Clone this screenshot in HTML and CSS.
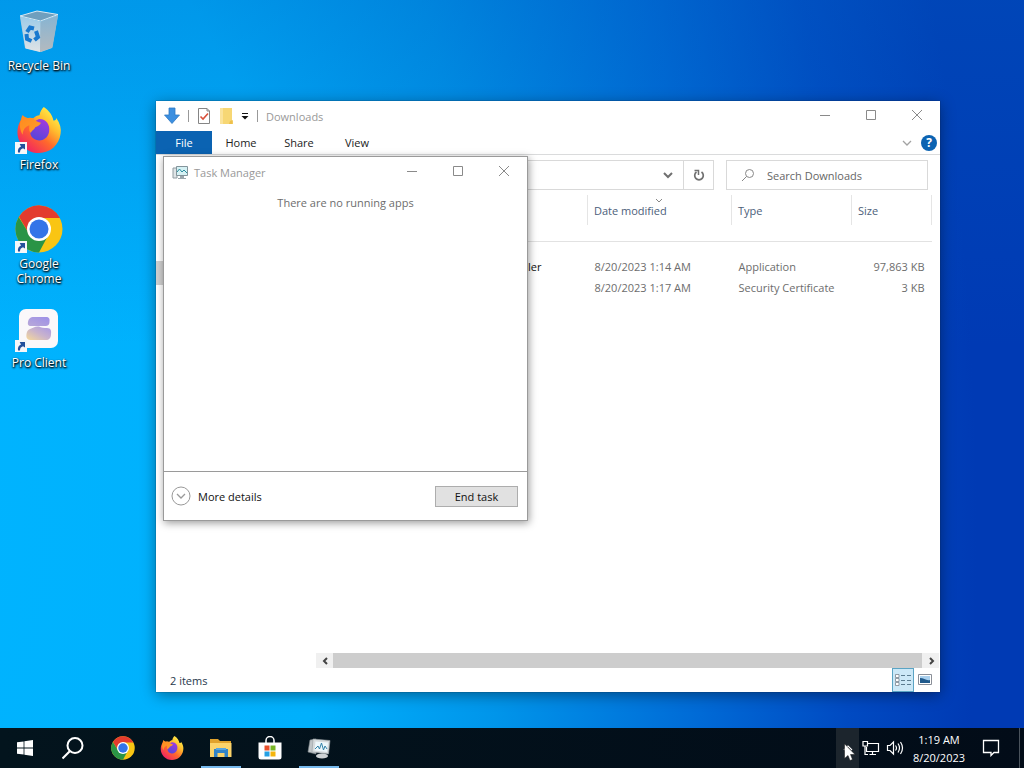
FILE: index.html
```
<!DOCTYPE html>
<html lang="en">
<head>
<meta charset="utf-8">
<meta name="viewport" content="width=device-width, initial-scale=1">
<title>Desktop</title>
<link rel="stylesheet" href="styles.css">
</head>
<body>
<svg class="defs" aria-hidden="true">
  <defs>
    <linearGradient id="ffBody" x1=".85" y1=".1" x2=".2" y2=".9">
      <stop offset="0" stop-color="#fff04a"/><stop offset=".3" stop-color="#ffbd2e"/><stop offset=".6" stop-color="#ff6a2b"/><stop offset="1" stop-color="#f2275f"/>
    </linearGradient>
    <linearGradient id="ffGlobe" x1=".7" y1="0" x2=".3" y2="1">
      <stop offset="0" stop-color="#a13adf"/><stop offset="1" stop-color="#5546d8"/>
    </linearGradient>
    <linearGradient id="ffHead" x1="0" y1="0" x2="1" y2="1">
      <stop offset="0" stop-color="#ff8a1f"/><stop offset="1" stop-color="#ff9d2a"/>
    </linearGradient>
    <linearGradient id="binFront" x1="0" y1="0" x2="0" y2="1">
      <stop offset="0" stop-color="#9dcbe8"/><stop offset="1" stop-color="#dfe3e6"/>
    </linearGradient>
    <linearGradient id="binSide" x1="0" y1="0" x2="0" y2="1">
      <stop offset="0" stop-color="#86b4d2"/><stop offset="1" stop-color="#b4babf"/>
    </linearGradient>
    <linearGradient id="proTop" x1="0" y1="1" x2="1" y2="0">
      <stop offset="0" stop-color="#b9a9d8"/><stop offset="1" stop-color="#9c8fe8"/>
    </linearGradient>
    <linearGradient id="proLow" x1="0" y1="1" x2="1" y2="0">
      <stop offset="0" stop-color="#f6d99a"/><stop offset=".5" stop-color="#c9b3cc"/><stop offset="1" stop-color="#a797e6"/>
    </linearGradient>
    <symbol id="chrome" viewBox="0 0 48 48">
      <circle cx="24" cy="24" r="23.500" fill="#f9c513"/>
      <path d="M24 13H45A23.500 23.500 0 0 0 4 11.800L14.500 29.500Z" fill="#e33b2e"/>
      <path d="M14.500 29.500L3.700 12A23.500 23.500 0 0 0 24 47.500L33.600 29.500L24 35Z" fill="#2a9446"/>
      <circle cx="24" cy="24" r="12" fill="#fff"/>
      <circle cx="24" cy="24" r="9.500" fill="#3374e8"/>
    </symbol>
    <symbol id="firefox" viewBox="0 0 48 48">
      <path d="M29 0C35 4 38 9 39 14C41 14.500 42 13 42 11.500C46 17 47.500 23 46.500 28C45 40 35.500 48 24 48C11 48 1.500 38 1.500 26C1.500 21 3 16.500 5.500 13C5.500 11 6 9.500 7 8.500C8 10 9 11 10.500 12C13 11 16 11 18 11.800C20 9.500 22.500 8.500 24.500 8.500C25 5 27 2 29 0Z" fill="url(#ffBody)"/>
      <path d="M24 12.500C31 12 36 18 34.500 26C33 33 27 36 21.500 34.500C16 33 14 28 15 23C16 18 20 14 24 12.500Z" fill="url(#ffGlobe)"/>
      <path d="M7 8.500C10 12 14 11.300 18 11.800C19.500 14.500 22 15.500 26 16.500C25.500 19 22.500 20.500 20 21C19.500 23.500 16 24.500 15.500 27C13 25 14 21 14 19C10 20 7 24 7 29C4 24 3 17 5.500 13Z" fill="url(#ffHead)"/>
    </symbol>
    <symbol id="shortcut" viewBox="0 0 12 12">
      <path d="M0 0H12V12H0Z" fill="#f6f7f9"/>
      <path d="M3 10.500C2.500 7.500 3.500 5.500 6 4.500L4.700 2H10V7.500L8 6.300C5.800 7 5 8.500 5 10.500Z" fill="#24509c"/>
    </symbol>
    <symbol id="min" viewBox="0 0 12 12"><path d="M1 5.500H11" stroke="currentColor"/></symbol>
    <symbol id="max" viewBox="0 0 12 12"><path d="M1.500 .5H10.500V9.500H1.500Z" fill="none" stroke="currentColor"/></symbol>
    <symbol id="close" viewBox="0 0 12 12"><path d="M1 0L11 10M11 0L1 10" stroke="currentColor"/></symbol>
  </defs>
</svg>

<main class="desktop">
  <nav class="shortcuts" aria-label="Desktop shortcuts">
    <a class="shortcut" href="#recycle-bin">
      <svg class="shortcut-icon" viewBox="0 0 48 48" aria-hidden="true">
        <path d="M5 10L25 15L43 8L37 41L26 45L10 41Z" fill="#a9c9dc"/>
        <path d="M5.500 9.500L25.500 14.500L25 45L10.500 41.500Z" fill="url(#binFront)"/>
        <path d="M25.500 14.500L43 8.500L37.500 40.500L25 45Z" fill="url(#binSide)"/>
        <path d="M5 9L22 4L43 7.500L25.500 14Z" fill="#6f9fbe" stroke="#dbeaf3"/>
        <g fill="none" stroke="#1879cf" stroke-width="4"><path d="M12 25L15 20.500L19 21.500"/><path d="M21 24L23 30L19.500 33"/><path d="M16.500 34L12 32L11.500 27"/></g>
      </svg>
      <span class="shortcut-label">Recycle Bin</span>
    </a>
    <a class="shortcut" href="#firefox">
      <svg class="shortcut-icon" viewBox="0 0 48 48" aria-hidden="true">
        <use href="#firefox" x="1" y="1" width="46" height="46"/><use href="#shortcut" x="0" y="36" width="12" height="12"/>
      </svg>
      <span class="shortcut-label">Firefox</span>
    </a>
    <a class="shortcut" href="#chrome">
      <svg class="shortcut-icon" viewBox="0 0 48 48" aria-hidden="true">
        <use href="#chrome" width="48" height="48"/><use href="#shortcut" x="0" y="36" width="12" height="12"/>
      </svg>
      <span class="shortcut-label">Google Chrome</span>
    </a>
    <a class="shortcut" href="#pro-client">
      <svg class="shortcut-icon" viewBox="0 0 48 48" aria-hidden="true">
        <rect x="4" y="5" width="39" height="39" rx="7" fill="#faf8fa"/>
        <path d="M19 13H31C34 13 35 15 34.500 17.500C34.500 21 33 22 30 22H16C13 22 12.500 20 13 18C13.500 15 15 13 19 13Z" fill="url(#proTop)"/>
        <path d="M15 25C18 24 20 22 24 22.500C26 24 29 24 32 24C36 24 36.500 27 36 30C36 34 34 36 31 36H17C12 36 11 34 11.500 30C12 27 13 26 15 25Z" fill="url(#proLow)"/>
        <use href="#shortcut" x="0" y="36" width="12" height="12"/>
      </svg>
      <span class="shortcut-label">Pro Client</span>
    </a>
  </nav>

  <section class="window explorer" aria-label="Downloads">
    <header class="titlebar">
      <div class="quick">
        <svg width="16" height="18" viewBox="0 0 16 18" aria-hidden="true"><path d="M5 1H11V8H15.500L8 16.500L.5 8H5Z" fill="#3b8fe0" stroke="#2d78c4" stroke-width=".8"/></svg>
        <span class="bar"></span>
        <button class="tool" aria-label="Properties"><svg width="14" height="16" viewBox="0 0 14 16"><path d="M1.500.5H10L12.500 3V15.500H1.500Z" fill="#fff" stroke="#858585"/><path d="M10 .5V3H12.500" fill="none" stroke="#858585"/><path d="M3.500 8.500L6 11L11 5.500" fill="none" stroke="#d9503a" stroke-width="1.600"/></svg></button>
        <button class="tool" aria-label="New folder"><svg width="14" height="16" viewBox="0 0 14 16"><path d="M1 0H13V12L14 13V16H1Z" fill="#f7d774"/><path d="M1 0H4V16H1Z" fill="#fbe39a"/><path d="M11 13L13.500 12V16H10Z" fill="#eec04c"/></svg></button>
        <button class="tool" aria-label="Customize toolbar"><svg width="8" height="8" viewBox="0 0 8 8"><path d="M1 1.500H7" stroke="#111"/><path d="M.5 4H7.500L4 7.500Z" fill="#111"/></svg></button>
        <span class="bar"></span>
        <h1 class="title">Downloads</h1>
      </div>
      <div class="controls">
        <button class="control" aria-label="Minimize"><svg width="12" height="12"><use href="#min"/></svg></button>
        <button class="control" aria-label="Maximize"><svg width="12" height="12"><use href="#max"/></svg></button>
        <button class="control" aria-label="Close"><svg width="12" height="12"><use href="#close"/></svg></button>
      </div>
    </header>

    <div class="ribbon">
      <button class="tab tab-file">File</button>
      <button class="tab">Home</button>
      <button class="tab">Share</button>
      <button class="tab">View</button>
      <div class="ribbon-end">
        <button class="tool" aria-label="Expand the ribbon"><svg width="10" height="8" viewBox="0 0 10 8"><path d="M1 2L5 6L9 2" fill="none" stroke="#a2a2a2" stroke-width="1.300"/></svg></button>
        <button class="help" aria-label="Help">?</button>
      </div>
    </div>

    <div class="navbar">
      <div class="address">
        <input class="address-input" type="text" aria-label="Address">
        <button class="tool address-drop" aria-label="Previous locations"><svg width="10" height="8" viewBox="0 0 10 8"><path d="M1 2L5 6L9 2" fill="none" stroke="#707070" stroke-width="2"/></svg></button>
        <button class="refresh" aria-label="Refresh"><svg width="12" height="14" viewBox="0 0 12 14"><path d="M8.500 4A4.300 4.300 0 1 1 3.500 4" fill="none" stroke="#707070" stroke-width="1.700"/><path d="M1.500 2.500H5.500V7" fill="none" stroke="#707070" stroke-width="1.500"/></svg></button>
      </div>
      <label class="search">
        <svg width="14" height="14" viewBox="0 0 14 14" aria-hidden="true"><circle cx="8.500" cy="5.500" r="4" fill="none" stroke="#888"/><path d="M5.500 8.500L1 13" stroke="#888"/></svg>
        <input class="search-input" type="search" placeholder="Search Downloads" aria-label="Search Downloads">
      </label>
    </div>

    <div class="content">
      <div class="tree"><div class="tree-selected"></div></div>
      <div class="files">
        <table class="file-table">
          <colgroup><col><col class="col-date"><col class="col-type"><col class="col-size"></colgroup>
          <thead>
            <tr><th scope="col" aria-label="Name"></th><th scope="col"><span class="sorted">Date modified<svg class="sort-mark" width="8" height="5" viewBox="0 0 8 5" aria-hidden="true"><path d="M1 1L4 4L7 1" fill="none" stroke="#888"/></svg></span></th><th scope="col">Type</th><th scope="col">Size</th></tr>
          </thead>
          <tbody>
            <tr class="group"><td colspan="4"></td></tr>
            <tr class="gap"><td colspan="4"></td></tr>
            <tr><td class="name">ler</td><td>8/20/2023 1:14 AM</td><td>Application</td><td class="size">97,863 KB</td></tr>
            <tr><td class="name"></td><td>8/20/2023 1:17 AM</td><td>Security Certificate</td><td class="size">3 KB</td></tr>
          </tbody>
        </table>
        <div class="scroll">
          <button class="scroll-arrow" aria-label="Scroll left"><svg width="8" height="8" viewBox="0 0 8 8"><path d="M6 1L3 4L6 7" fill="none" stroke="#444" stroke-width="2"/></svg></button>
          <div class="scroll-thumb"></div>
          <button class="scroll-arrow" aria-label="Scroll right"><svg width="8" height="8" viewBox="0 0 8 8"><path d="M3 1L6 4L3 7" fill="none" stroke="#444" stroke-width="2"/></svg></button>
        </div>
      </div>
    </div>

    <footer class="status">
      <span>2 items</span>
      <div class="views">
        <button class="view view-on" aria-label="Details"><svg width="16" height="14" viewBox="0 0 16 14"><path d="M.5 1.500H4V4.500H.5ZM.5 5.500H4V8.500H.5ZM.5 9.500H4V12.500H.5Z" fill="#fff" stroke="#7c8590" stroke-width=".8"/><path d="M6 2.500H10M12 2.500H16M6 7.500H10M12 7.500H16M6 11.500H10M12 11.500H16" stroke="#5b7c90"/></svg></button>
        <button class="view" aria-label="Large icons"><svg width="14" height="12" viewBox="0 0 14 12"><path d="M.5.5H13.500V10.500H.5Z" fill="#fff" stroke="#8a8f98"/><path d="M2 2H12V9H2Z" fill="#a9d0ee"/><path d="M2 4C6 4 8 7 12 6V9H2Z" fill="#205a8c"/></svg></button>
      </div>
    </footer>
  </section>

  <section class="window taskman" aria-label="Task Manager">
    <header class="titlebar">
      <div class="taskman-name">
        <svg width="16" height="16" viewBox="0 0 16 16" aria-hidden="true"><path d="M1 4H5V14H1Z" fill="#dfe4e6" stroke="#919ca1"/><path d="M4.500 2.500H15.500V11.500H4.500Z" fill="#d5f1f4" stroke="#83949b"/><path d="M5 8L7.500 5L10 8L12 6L15 9" fill="none" stroke="#2b8d9f"/><path d="M8 12H12V14H14V15H6V14H8Z" fill="#9aa6ac"/></svg>
        <h2 class="title">Task Manager</h2>
      </div>
      <div class="controls">
        <button class="control" aria-label="Minimize"><svg width="12" height="12"><use href="#min"/></svg></button>
        <button class="control" aria-label="Maximize"><svg width="12" height="12"><use href="#max"/></svg></button>
        <button class="control" aria-label="Close"><svg width="12" height="12"><use href="#close"/></svg></button>
      </div>
    </header>
    <p class="empty">There are no running apps</p>
    <footer class="taskman-foot">
      <button class="more"><svg width="20" height="20" viewBox="0 0 20 20" aria-hidden="true"><circle cx="10" cy="10" r="9" fill="#fff" stroke="#999"/><path d="M6 8L10 12L14 8" fill="none" stroke="#999" stroke-width="1.300"/></svg>More details</button>
      <button class="end">End task</button>
    </footer>
  </section>
</main>

<footer class="taskbar">
  <div class="apps">
    <button class="app" aria-label="Start"><svg width="16" height="16" viewBox="0 0 16 16"><path d="M0 2.300L6.600 1.400V7.600H0ZM7.400 1.300L16 0V7.600H7.400ZM0 8.400H6.600V14.600L0 13.700ZM7.400 8.400H16V16L7.400 14.700Z" fill="#fff"/></svg></button>
    <button class="app" aria-label="Search"><svg width="24" height="24" viewBox="0 0 24 24"><circle cx="13" cy="9.500" r="7.500" fill="none" stroke="#fff" stroke-width="2"/><path d="M8 15L.5 22.500" stroke="#fff" stroke-width="2.200"/></svg></button>
    <button class="app" aria-label="Google Chrome"><svg width="24" height="24"><use href="#chrome"/></svg></button>
    <button class="app" aria-label="Firefox"><svg width="24" height="24"><use href="#firefox"/></svg></button>
    <button class="app app-open" aria-label="File Explorer"><svg width="24" height="24" viewBox="0 0 24 24"><path d="M1 3H9L11 5H22V9H1Z" fill="#e0a22c"/><path d="M1 7H22.500V21H1Z" fill="#fbd36a"/><path d="M5 13H19V21H15.500V17H8.500V21H5Z" fill="#3284c8"/><path d="M7 12H17V14H7Z" fill="#57a5df"/></svg></button>
    <button class="app" aria-label="Microsoft Store"><svg width="24" height="24" viewBox="0 0 24 24"><path d="M8 7V4.500A4 4 0 0 1 16 4.500V7" fill="none" stroke="#fff" stroke-width="1.500"/><path d="M.5 6.500H23.500V21Q23.500 23.500 21 23.500H3Q.5 23.500 .5 21Z" fill="#fff"/><path d="M6.500 9.500H11.500V14.500H6.500Z" fill="#e8502c"/><path d="M12.500 9.500H17.500V14.500H12.500Z" fill="#78b525"/><path d="M6.500 15.500H11.500V20.500H6.500Z" fill="#26a0e3"/><path d="M12.500 15.500H17.500V20.500H12.500Z" fill="#f5b50d"/></svg></button>
    <button class="app app-open" aria-label="Task Manager"><svg width="24" height="24" viewBox="0 0 24 24"><path d="M3 4L9 3V18L1 16Z" fill="#bfc4c7" stroke="#81888c" stroke-width=".6"/><path d="M6 3L23 4.500L21.500 18L5 16Z" fill="#d6dadc" stroke="#969da1" stroke-width=".6"/><path d="M8.500 5.500L21 6.500L20 16L7.500 14.500Z" fill="#edf7fb"/><path d="M8 13L11 10L12.500 13L14.500 7L16.500 14L18 10L20 13" fill="none" stroke="#3382a8"/><ellipse cx="15" cy="20" rx="6" ry="2.500" fill="#cfd3d5"/></svg></button>
  </div>
  <div class="tray">
    <button class="tray-up" aria-label="Show hidden icons"><svg width="10" height="6" viewBox="0 0 10 6"><path d="M1 5L5 1L9 5" fill="none" stroke="#fff" stroke-width="1.200"/></svg></button>
    <button class="tray-icon" aria-label="Network"><svg width="18" height="16" viewBox="0 0 18 16"><path d="M6 3.500H16.500V11.500H4.500V7M7.500 14.500H14M10.500 11.500V14.500" fill="none" stroke="#fff" stroke-width="1.200"/><path d="M1 1.500H5.500V6H1ZM3 6V14.500H6" fill="none" stroke="#fff" stroke-width="1.200"/></svg></button>
    <button class="tray-icon" aria-label="Volume"><svg width="18" height="16" viewBox="0 0 18 16"><path d="M1.500 5.500H4L7.500 2V14L4 10.500H1.500Z" fill="none" stroke="#fff" stroke-width="1.200"/><path d="M9.500 5.500Q11.500 8 9.500 10.500M12 3.500Q15 8 12 12.500M14.500 2Q18.500 8 14.500 14" fill="none" stroke="#fff" stroke-width="1.200"/></svg></button>
    <button class="clock"><span>1:19 AM</span><span>8/20/2023</span></button>
    <button class="notes" aria-label="Notifications"><svg width="18" height="18" viewBox="0 0 18 18"><path d="M1.500 1.500H16.500V13.500H12L9 16.500V13.500H1.500Z" fill="none" stroke="#fff" stroke-width="1.300"/></svg></button>
    <button class="show-desktop" aria-label="Show desktop"></button>
  </div>
</footer>
<svg class="pointer" width="12" height="18" viewBox="0 0 12 18" aria-hidden="true"><path d="M.5 .8V15.500L4 12.500L6 17.500L8.500 16.500L6.500 11.500H11Z" fill="#fff" stroke="#111" stroke-width=".5"/></svg>
</body>
</html>
```
FILE: styles.css
```
* {
  box-sizing: border-box;
}

body {
  margin: 0;
  min-height: 100vh;
  display: flex;
  flex-direction: column;
  position: relative;
  overflow: hidden;
  font: 12px/15px "Open Sans", "Noto Sans", sans-serif;
  color: #222;
  background:
    linear-gradient(#0060c04d, #0060c000 45%),
    radial-gradient(ellipse 110% 260% at -8% 70%, #00b4ff 0%, #00b0fc 36%, #0095ea 52%, #006ad6 70%, #004ac2 83%, #003ab4 94%);
}

button,
input {
  font: inherit;
  color: inherit;
  margin: 0;
  padding: 0;
  border: 0;
  background: none;
}

button {
  display: flex;
  align-items: center;
  justify-content: center;
}

svg {
  display: block;
  flex: none;
}

h1,
h2,
p {
  margin: 0;
  font: inherit;
}

.defs {
  position: absolute;
  width: 0;
  height: 0;
}

.desktop {
  flex: 1;
  position: relative;
}

/* Desktop shortcuts */

.shortcuts {
  display: flex;
  flex-direction: column;
  width: 78px;
  padding-top: 7px;
}

.shortcut {
  display: flex;
  flex-direction: column;
  align-items: center;
  gap: 3px;
  height: 99px;
  color: #fff;
  text-align: center;
  text-decoration: none;
}

.shortcut-icon {
  width: 48px;
  height: 48px;
}

.shortcut-label {
  width: 72px;
  text-shadow: 0 1px 2px #000, 1px 1px 2px #000;
}

/* Windows */

.window {
  position: absolute;
  display: flex;
  flex-direction: column;
  background: #fff;
  font-size: 11px;
}

.titlebar {
  display: flex;
  justify-content: space-between;
  height: 30px;
}

.title {
  color: #999;
}

.controls {
  display: flex;
  color: #8a8a8a;
}

.control {
  width: 46px;
}

.explorer {
  inset: 101px 84px 36px 156px;
  box-shadow: 0 0 1px #123c, 0 3px 14px #0006;
}

.quick {
  display: flex;
  align-items: center;
  gap: 8px;
  padding-left: 8px;
}

.bar {
  width: 1px;
  height: 12px;
  background: #999;
}

.ribbon {
  display: flex;
  height: 24px;
  border-bottom: 1px solid #dadbdc;
}

.tab {
  width: 58px;
}

.tab-file {
  width: 56px;
  color: #fff;
  background: #0b63b2;
}

.ribbon-end {
  display: flex;
  align-items: center;
  gap: 9px;
  margin-left: auto;
  padding-right: 3px;
}

.help {
  width: 16px;
  height: 16px;
  border-radius: 50%;
  color: #fff;
  background: #0b63b2;
  font-size: 12px;
  font-weight: 700;
}

.navbar {
  display: flex;
  gap: 12px;
  padding: 5px 12px 5px 8px;
}

.address {
  flex: 1;
  display: flex;
  height: 30px;
  border: 1px solid #d9d9d9;
}

.address-input {
  flex: 1;
  min-width: 0;
}

.address-drop {
  width: 30px;
}

.refresh {
  width: 30px;
  border-left: 1px solid #d9d9d9;
}

.search {
  display: flex;
  align-items: center;
  gap: 12px;
  width: 202px;
  padding-left: 14px;
  border: 1px solid #d9d9d9;
}

.search-input {
  flex: 1;
  min-width: 0;
}

.search-input::placeholder {
  color: #666;
  opacity: 1;
}

.content {
  flex: 1;
  display: flex;
}

.tree {
  width: 160px;
  padding-top: 66px;
}

.tree-selected {
  height: 24px;
  background: #d0d0d0;
}

.files {
  flex: 1;
  display: flex;
  flex-direction: column;
  justify-content: space-between;
}

.file-table {
  table-layout: fixed;
  width: calc(100% - 8px);
  border-collapse: collapse;
  color: #6d6d6d;
}

.col-date {
  width: 144px;
}

.col-type {
  width: 120px;
}

.col-size {
  width: 80px;
}

.file-table th {
  height: 30px;
  padding: 0 6px;
  border-left: 1px solid #e5e5e5;
  font-weight: 400;
  text-align: left;
  color: #4c607a;
}

.file-table th:first-child {
  border-left: 0;
}

.file-table th:last-child {
  border-right: 1px solid #e5e5e5;
}

.sorted {
  position: relative;
}

.sort-mark {
  position: absolute;
  right: 4px;
  top: -5px;
}

.file-table td {
  height: 21px;
  padding: 0 7px;
}

.file-table .group td {
  height: 16px;
  border-bottom: 1px solid #e2e2e2;
}

.file-table .gap td {
  height: 15px;
}

.file-table .name {
  padding-right: 46px;
  text-align: right;
  color: #111;
}

.file-table .size {
  text-align: right;
}

.scroll {
  display: flex;
  height: 15px;
  margin-right: 1px;
  background: #f0f0f0;
}

.scroll-arrow {
  width: 17px;
}

.scroll-thumb {
  flex: 1;
  background: #cdcdcd;
}

.status {
  display: flex;
  align-items: center;
  justify-content: space-between;
  height: 24px;
  padding: 0 4px 0 14px;
  color: #28384c;
}

.views {
  display: flex;
  height: 24px;
}

.view {
  width: 22px;
}

.view-on {
  background: #cce8f7;
  border: 1px solid #5ba4c4;
}

/* Task Manager */

.taskman {
  left: 163px;
  top: 156px;
  width: 365px;
  min-height: 365px;
  border: 1px solid #9a9a9a;
  box-shadow: 1px 2px 8px #0006;
}

.taskman-name {
  display: flex;
  align-items: center;
  gap: 6px;
  padding-left: 8px;
}

.empty {
  flex: 1;
  padding-top: 8px;
  text-align: center;
  color: #6d6d6d;
}

.taskman-foot {
  display: flex;
  align-items: center;
  justify-content: space-between;
  height: 49px;
  padding: 0 9px 0 7px;
  border-top: 1px solid #9a9a9a;
  color: #111;
}

.more {
  gap: 7px;
}

.end {
  width: 83px;
  height: 21px;
  background: #e1e1e1;
  border: 1px solid #adadad;
}

/* Taskbar */

.taskbar {
  display: flex;
  justify-content: space-between;
  height: 40px;
  color: #fff;
  background: linear-gradient(90deg, #03141d, #020c18);
}

.apps,
.tray {
  display: flex;
}

.app {
  width: 49px;
  padding: 0 4px;
}

.app-open {
  background: linear-gradient(#76b9ed, #76b9ed) center bottom / 40px 2px no-repeat;
}

.tray-up {
  width: 23px;
  background: #1c252d;
}

.tray-icon {
  width: 24px;
}

.clock {
  flex-direction: column;
  gap: 3px;
  width: 64px;
  font-size: 11px;
}

.notes {
  width: 40px;
}

.show-desktop {
  width: 5px;
  margin-left: 8px;
  border-left: 1px solid #4a535c;
}

.pointer {
  position: absolute;
  left: 844px;
  top: 743px;
}
```
